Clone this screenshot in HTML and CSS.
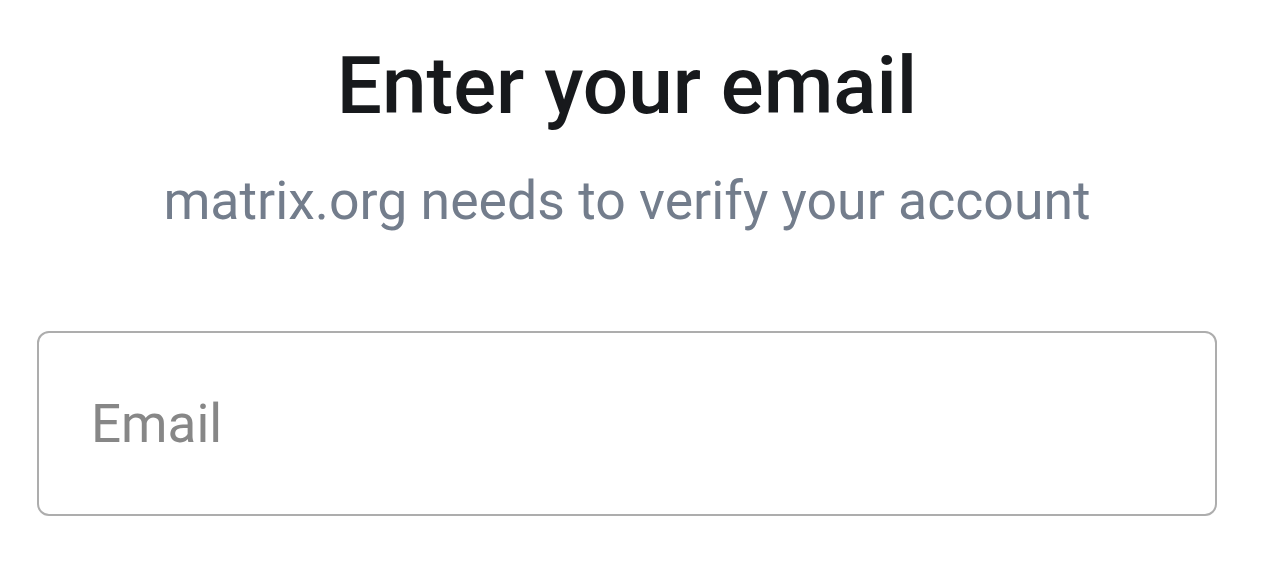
FILE: index.html
```html
<!DOCTYPE html>
<html>
<head>
<meta charset="utf-8">
<link rel="stylesheet" href="styles.css">
</head>
<body>
<main class="page">
  <h1 class="title">Enter your email</h1>
  <p class="subtitle">matrix.org needs to verify your account</p>
  <input class="field" type="email" placeholder="Email">
</main>
</body>
</html>
```
FILE: styles.css
```css
html, body {
  margin: 0;
  padding: 0;
  background: #ffffff;
}
.page {
  box-sizing: border-box;
  width: 1254px;
  padding: 38px 37px 0 37px;
  display: flex;
  flex-direction: column;
  align-items: center;
  font-family: Roboto, "Liberation Sans", sans-serif;
}
.title {
  margin: 0;
  font-size: 80px;
  line-height: 96px;
  font-weight: 500;
  color: #17191c;
}
.subtitle {
  margin: 36px 0 0 0;
  font-size: 53.6px;
  line-height: 62px;
  font-weight: 400;
  color: #737d8c;
}
.field {
  box-sizing: border-box;
  margin: 99px 0 0 0;
  width: 1180px;
  height: 185px;
  padding: 0 52px;
  border: 2px solid #adadad;
  border-radius: 12px;
  background: #ffffff;
  font-family: Roboto, "Liberation Sans", sans-serif;
  font-size: 53px;
  color: #17191c;
  outline: none;
}
.field::placeholder {
  color: #878787;
  opacity: 1;
}
```
